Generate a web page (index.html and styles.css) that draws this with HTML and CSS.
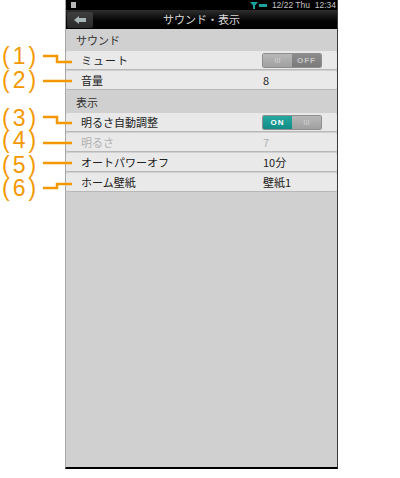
FILE: index.html
```html
<!DOCTYPE html>
<html lang="ja">
<head>
    <meta charset="UTF-8">
    <meta name="viewport" content="width=device-width, initial-scale=1.0">
    <title>サウンド・表示</title>
    <link rel="stylesheet" href="styles.css">
</head>
<body>
    <div class="phone">
        <div class="status-bar">
            <span class="status-left"></span>
            <svg class="wifi" width="8" height="7" viewBox="0 0 8 7"><path d="M0 0h8L5 3.500v3.500H3V3.500z" fill="#1aa39b"/></svg>
            <span class="battery"></span>
            <span class="clock">12/22 Thu&nbsp; 12:34</span>
        </div>
        <div class="title-bar">
            <div class="back-btn">
                <svg width="12" height="8" viewBox="0 0 12 8"><path d="M0 4L5 0v2h7v4H5v2z" fill="#a9b4b4"/></svg>
            </div>
            <div class="title">サウンド・表示</div>
        </div>

        <div class="section">サウンド</div>
        <div class="row">
            <span class="label label-kana">ミュート</span>
            <div class="toggle">
                <span class="knob">III</span>
                <span class="state">OFF</span>
            </div>
        </div>
        <div class="row">
            <span class="label">音量</span>
            <span class="value">8</span>
        </div>

        <div class="section">表示</div>
        <div class="row">
            <span class="label">明るさ自動調整</span>
            <div class="toggle">
                <span class="state state-on">ON</span>
                <span class="knob">III</span>
            </div>
        </div>
        <div class="row disabled">
            <span class="label">明るさ</span>
            <span class="value">7</span>
        </div>
        <div class="row">
            <span class="label">オートパワーオフ</span>
            <span class="value">10分</span>
        </div>
        <div class="row">
            <span class="label">ホーム壁紙</span>
            <span class="value">壁紙1</span>
        </div>
    </div>

    <!-- 注釈 -->
    <span class="note note-1">(1)</span>
    <span class="note note-2">(2)</span>
    <span class="note note-3">(3)</span>
    <span class="note note-4">(4)</span>
    <span class="note note-5">(5)</span>
    <span class="note note-6">(6)</span>
    <svg class="leaders" width="80" height="200" viewBox="0 0 80 200">
        <g fill="none" stroke="#f39800" stroke-width="2.500">
            <path d="M43 56H57V62H72"/>
            <path d="M43 81H72"/>
            <path d="M43 117H57V123H72"/>
            <path d="M43 143H72"/>
            <path d="M43 163H72"/>
            <path d="M43 188H57V184H72"/>
        </g>
    </svg>
</body>
</html>
```

FILE: styles.css
```css
body {
    margin: 0;
    background-color: #ffffff;
    font-family: "Noto Sans CJK JP", "Noto Sans", sans-serif;
}

.phone {
    box-sizing: border-box;
    width: 273px;
    height: 469px;
    margin-left: 65px;
    background-color: #d0d0d0;
    border-left: 1px solid #a8a8a8;
    border-right: 1px solid #3a3a3a;
    border-bottom: 2px solid #000000;
    box-shadow: 0 1px 0 #bbbbbb;
}

.status-bar {
    display: flex;
    align-items: center;
    height: 10px;
    padding: 0 1px 0 5px;
    background-color: #000000;
    color: #c4c4c4;
    font-family: "Liberation Sans", sans-serif;
    font-size: 8.500px;
}

.status-left {
    width: 5px;
    height: 6px;
    margin-right: auto;
    background-color: #b8b8b8;
}

.battery {
    width: 8px;
    height: 3px;
    margin: 0 5px 0 1px;
    background-color: #1aa39b;
}

.clock {
    white-space: nowrap;
}

.title-bar {
    position: relative;
    box-sizing: border-box;
    height: 19px;
    padding: 2px 0 1px 1px;
    background: linear-gradient(#2e2e2e, #050505 55%, #000000);
}

.back-btn {
    display: flex;
    align-items: center;
    justify-content: center;
    width: 26px;
    height: 16px;
    background: linear-gradient(#3e3e3e, #2a2a2a);
    border-radius: 2px;
}

.title {
    position: absolute;
    top: 0;
    left: 0;
    right: 0;
    color: #d8d8d8;
    font-size: 11px;
    line-height: 19px;
    text-align: center;
}

.section {
    height: 22px;
    padding-left: 10px;
    color: #333333;
    font-size: 11px;
    line-height: 22px;
}

.row {
    display: flex;
    align-items: center;
    box-sizing: border-box;
    height: 19px;
    margin-bottom: 1px;
    padding: 0 15px;
    background-color: #e9e9e9;
    border-radius: 2px;
    border-bottom: 1px solid #b8b8b8;
    color: #222222;
    font-size: 11px;
}

.label {
    width: 182px;
    flex: none;
    white-space: nowrap;
}

.label-kana {
    letter-spacing: 1px;
}

.disabled {
    color: #b0b0b0;
}

.toggle {
    display: flex;
    box-sizing: border-box;
    width: 60px;
    height: 15px;
    margin-left: -1px;
    border: 1px solid #8e8e8e;
    border-radius: 2px;
    overflow: hidden;
    font-family: "Liberation Sans", sans-serif;
    font-size: 8px;
    font-weight: bold;
    line-height: 13px;
    text-align: center;
}

.knob {
    flex: 1;
    background: linear-gradient(#b8b8b8, #a0a0a0);
    color: #d0d0d0;
    font-weight: normal;
}

.state {
    flex: 1;
    background: linear-gradient(#8c8c8c, #7a7a7a);
    color: #c8c8c8;
    letter-spacing: 1px;
}

.state-on {
    background: linear-gradient(#23a8a0, #128c86);
    color: #ffffff;
}

.note {
    position: absolute;
    left: 2px;
    color: #f39800;
    font-family: "Liberation Sans", sans-serif;
    font-size: 23px;
    line-height: 20px;
    letter-spacing: 3px;
}

.note-1 { top: 46px; }
.note-2 { top: 70px; }
.note-3 { top: 108px; }
.note-4 { top: 130px; }
.note-5 { top: 155px; }
.note-6 { top: 178px; }

.leaders {
    position: absolute;
    top: 0;
    left: 0;
}
```
